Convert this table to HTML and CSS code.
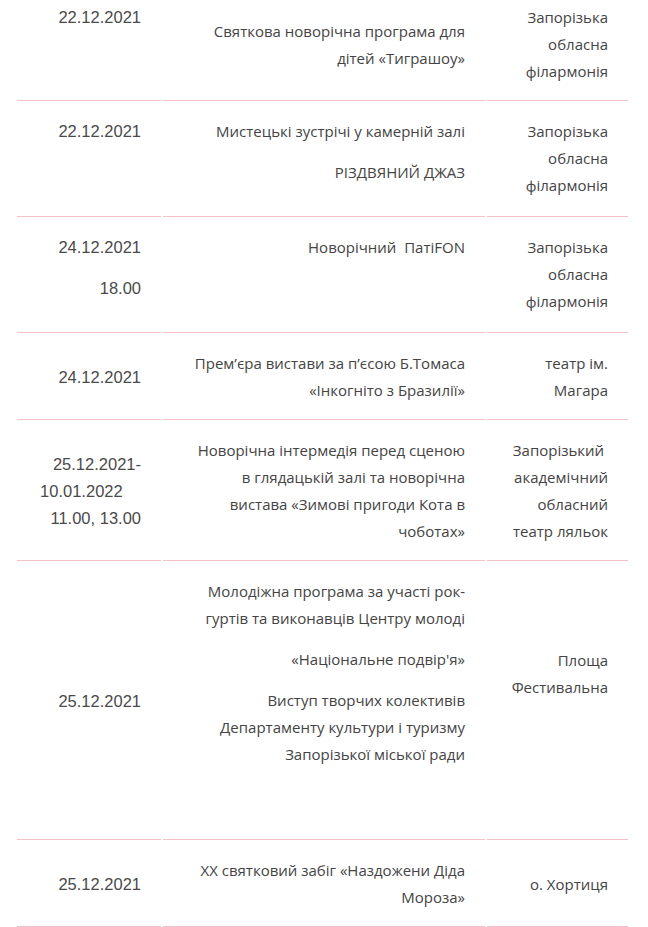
FILE: index.html
```html
<!DOCTYPE html>
<html lang="uk">
<head>
<meta charset="utf-8">
<title>Афіша</title>
<link rel="stylesheet" href="styles.css">
</head>
<body>
<div class="page">
<table class="schedule">
  <colgroup>
    <col class="c-date">
    <col class="c-event">
    <col class="c-place">
  </colgroup>
  <tbody>
    <tr>
      <td class="date top">22.12.2021</td>
      <td class="event">Святкова новорічна програма для<br>дітей «Тиграшоу»</td>
      <td class="place">Запорізька<br>обласна<br>філармонія</td>
    </tr>
    <tr class="tall">
      <td class="date top">22.12.2021</td>
      <td class="event top"><p>Мистецькі зустрічі у камерній залі</p><p>РІЗДВЯНИЙ ДЖАЗ</p></td>
      <td class="place">Запорізька<br>обласна<br>філармонія</td>
    </tr>
    <tr class="tall">
      <td class="date top"><p>24.12.2021</p><p>18.00</p></td>
      <td class="event top">Новорічний&nbsp; ПатіFON</td>
      <td class="place">Запорізька<br>обласна<br>філармонія</td>
    </tr>
    <tr>
      <td class="date">24.12.2021</td>
      <td class="event">Прем’єра вистави за п’єсою Б.Томаса<br>«Інкогніто з Бразилії»</td>
      <td class="place">театр ім.<br>Магара</td>
    </tr>
    <tr>
      <td class="date">25.12.2021-<br>10.01.2022&nbsp;&nbsp;&nbsp;&nbsp;<br>11.00, 13.00</td>
      <td class="event">Новорічна інтермедія перед сценою<br>в глядацькій залі та новорічна<br>вистава «Зимові пригоди Кота в<br>чоботах»</td>
      <td class="place">Запорізький&nbsp;<br>академічний<br>обласний<br>театр ляльок</td>
    </tr>
    <tr>
      <td class="date">25.12.2021</td>
      <td class="event extra-bottom"><p>Молодіжна програма за участі рок-<br>гуртів та виконавців Центру молоді</p><p>«Національне подвір'я»</p><p>Виступ творчих колективів<br>Департаменту культури і туризму<br>Запорізької міської ради</p></td>
      <td class="place offset">Площа<br>Фестивальна</td>
    </tr>
    <tr>
      <td class="date">25.12.2021</td>
      <td class="event">ХХ святковий забіг «Наздожени Діда<br>Мороза»</td>
      <td class="place">о. Хортиця</td>
    </tr>
  </tbody>
</table>
</div>
</body>
</html>
```
FILE: styles.css
```css
html, body {
  margin: 0;
  padding: 0;
  background: #ffffff;
}

.page {
  padding: 0 15px;
}

.schedule {
  table-layout: fixed;
  width: 615px;
  border-collapse: separate;
  border-spacing: 2px;
  margin-top: -13px;
  font-family: "Open Sans", "Liberation Sans", sans-serif;
  font-size: 15px;
  line-height: 27px;
  color: #444444;
}

.c-date { width: 144px; }
.c-event { width: 322px; }
.c-place { width: 141px; }

.schedule td {
  padding: 15px 20px 15px 8px;
  border-bottom: 1px solid #f3c0c9;
  text-align: right;
  vertical-align: middle;
  white-space: nowrap;
}

.schedule td.date {
  font-family: "Liberation Sans", Arial, sans-serif;
  font-size: 16.5px;
  color: #4a4a4a;
}

.schedule td.top {
  vertical-align: top;
}

.schedule tr.tall td {
  padding-bottom: 17px;
}

.schedule p {
  margin: 0 0 14px;
}

.schedule p:last-child {
  margin-bottom: 0;
}

.schedule td.extra-bottom {
  padding-bottom: 71px;
}

.schedule td.offset {
  vertical-align: top;
  padding-top: 84px;
}
```
